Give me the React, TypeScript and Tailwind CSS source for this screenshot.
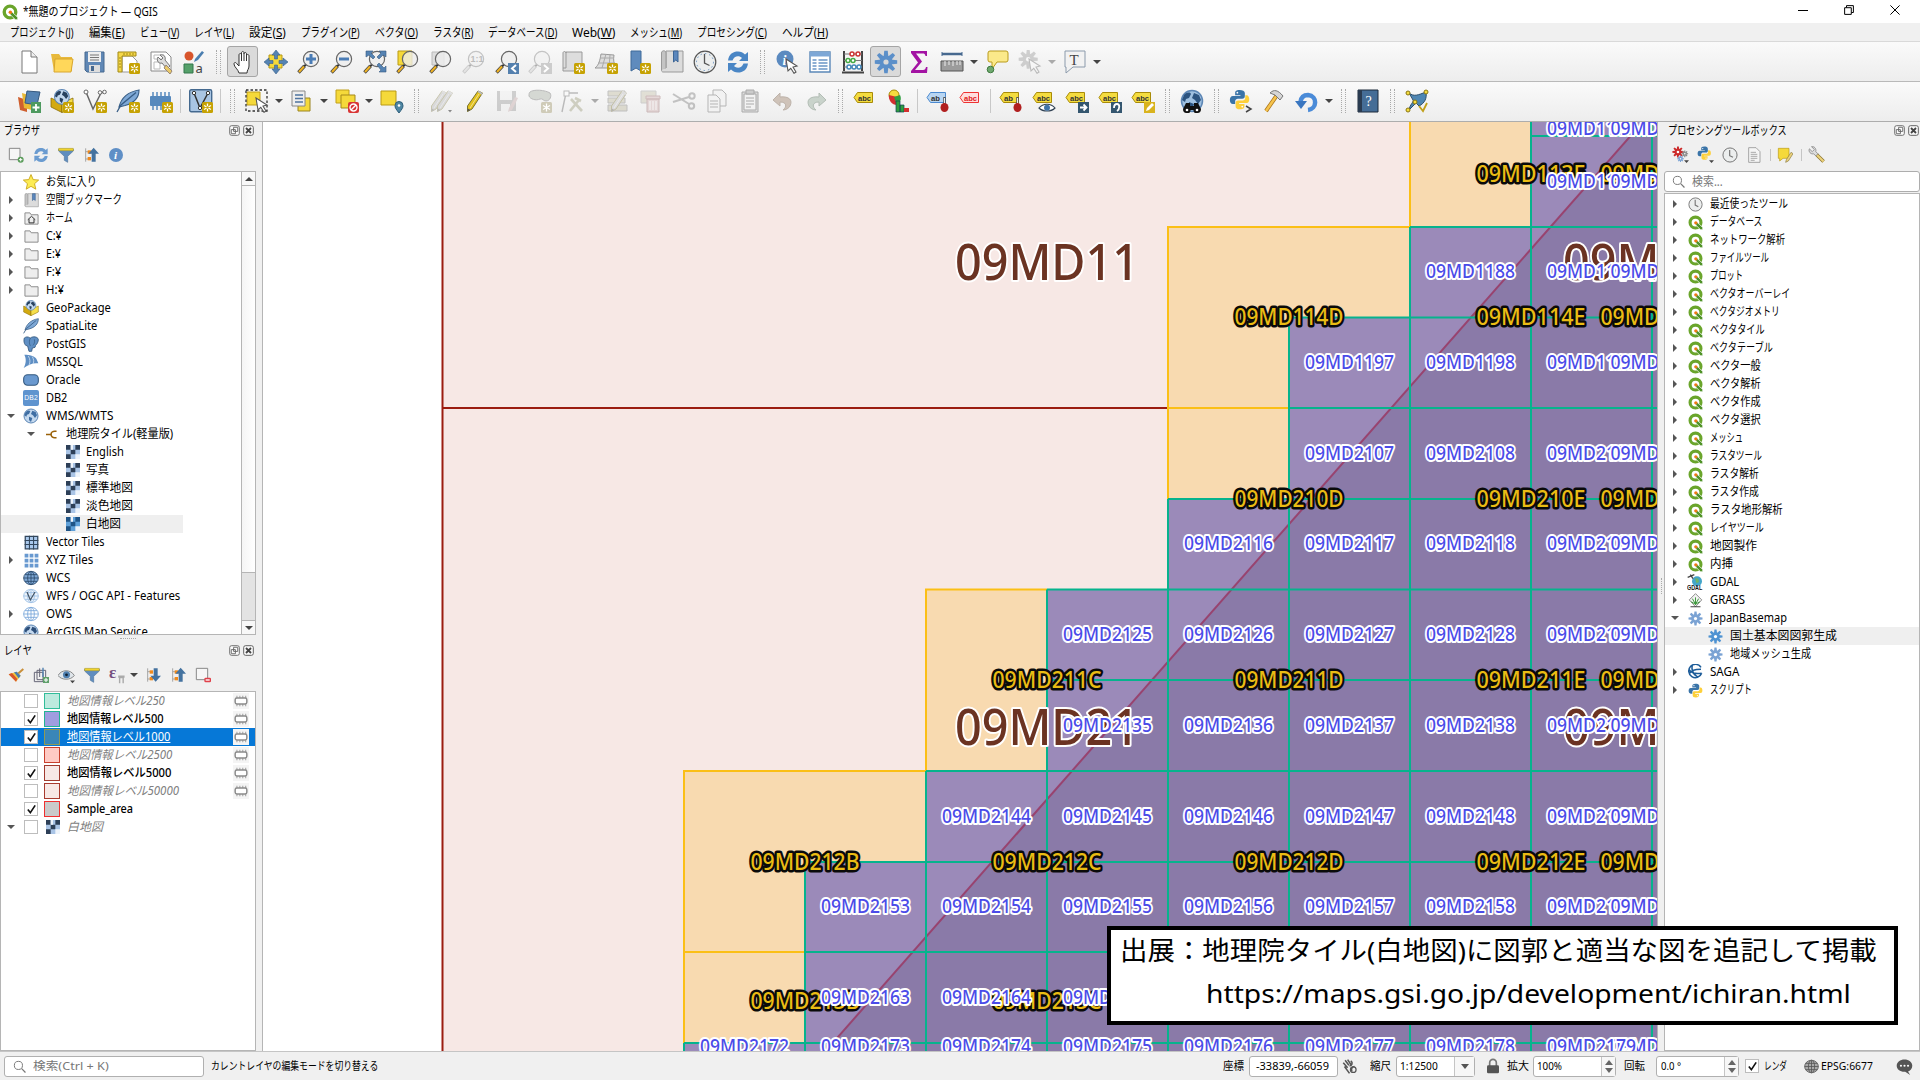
import React, { useLayoutEffect, useRef, useState } from 'react';

const UI = "font-['Noto_Sans','Noto_Sans_CJK_JP',sans-serif]";

/* One line of text, condensed or widened to a fixed advance width. */
function Fit({ w, className = '', children }: { w: number; className?: string; children: React.ReactNode }) {
  const ref = useRef<HTMLSpanElement>(null);
  const [s, setS] = useState(1);
  useLayoutEffect(() => {
    if (ref.current && ref.current.offsetWidth) setS(w / ref.current.offsetWidth);
  }, [w]);
  return (
    <span className="inline-block shrink-0 whitespace-nowrap" style={{ width: w }}>
      <span ref={ref} className={`inline-block origin-left whitespace-nowrap ${className}`} style={{ transform: `scaleX(${s})` }}>
        {children}
      </span>
    </span>
  );
}

function Svg({ s = 24, children, className = '' }: { s?: number; children: React.ReactNode; className?: string }) {
  return (
    <svg width={s} height={s} viewBox="0 0 24 24" className={`shrink-0 ${className}`} fill="none">
      {children}
    </svg>
  );
}

/* ---------- shared icon parts ---------- */
const Star = () => (
  <g>
    <rect x="13" y="13" width="11" height="11" rx="1.5" fill="#c6a203" />
    <path d="M18.5 14.5v8M15 16.5l7 4M15 20.5l7-4" stroke="#fff" strokeWidth="1.3" />
    <circle cx="18.5" cy="18.5" r="1.3" fill="#c6a203" />
  </g>
);
const Lens = ({ dim = false, children }: { dim?: boolean; children?: React.ReactNode }) => (
  <g opacity={dim ? 0.35 : 1}>
    <path d="M9.5 14L7 16.5" stroke="#333" strokeWidth="2" />
    <path d="M7.5 16L1.5 22.5" stroke={dim ? '#777' : '#444'} strokeWidth="3.4" />
    <path d="M7 16.5L2 22" stroke={dim ? '#ccc' : '#f0b323'} strokeWidth="2" />
    <circle cx="14" cy="9" r="7.6" fill="#eee" fillOpacity="0.8" stroke="#666" strokeWidth="1.2" />
    {children}
  </g>
);
const Pencil = ({ c = '#e3c21c', x = 0 }: { c?: string; x?: number }) => (
  <g transform={`translate(${x} 0)`}>
    <path d="M16 2l4.5 2L10 20l-4.5 2.5L5.500 17z" fill={c} stroke="#7b7330" strokeWidth="1" />
    <path d="M15.500 3L20 6l.6-2L16.500 1.500z" fill="#bbb" />
    <path d="M5.500 22.500l.3-3 2.600 1.600z" fill="#555" />
    <path d="M17 5L8 19" stroke="#fff" strokeOpacity=".5" />
  </g>
);
const gearTeeth = [0, 45, 90, 135, 180, 225, 270, 315];
const Gear = ({ c = '#5b8fc9', hole = '#d8d8d8' }: { c?: string; hole?: string }) => (
  <g>
    {gearTeeth.map((a) => (
      <path key={a} d="M10.300 .8h3.400l.8 6.700h-5z" fill={c} transform={`rotate(${a} 12 12)`} />
    ))}
    <circle cx="12" cy="12" r="6.500" fill={c} />
    <circle cx="12" cy="12" r="2.600" fill={hole} />
  </g>
);
const Globe = ({ c = '#5c86b5', line = '#27415f', bg = '#c3d8ee' }: { c?: string; line?: string; bg?: string }) => (
  <g>
    <circle cx="12" cy="12" r="10.500" fill={bg} stroke={c} strokeWidth="1.500" />
    <path d="M4 6c3-3 6-3 7-1l-2 4-3 1-1 3-3-2zM14 4l5 2 2 5-3 4-3-4-3-2zM9 13l5 2-2 6-3-3z" fill={line} />
  </g>
);
const Grid = ({ c, bg }: { c: string; bg: string }) => (
  <g stroke={c} strokeWidth="1.300" fill={bg}>
    <ellipse cx="12" cy="12" rx="11" ry="10" />
    <ellipse cx="12" cy="12" rx="5" ry="10" />
    <path d="M1 12h22M3 7h18M3 17h18M12 2v20" />
  </g>
);
const Python = () => (
  <g>
    <path d="M12 1c-4 0-5 1.500-5 3.500V7h6v1H4.500C2 8 1 10 1 12.500S2 17 4.500 17H7v-3c0-2 1.500-3 3-3h5c2 0 3-1 3-3V4.500C18 2 15.500 1 12 1z" fill="#3a74a8" />
    <path d="M12.500 23c4 0 5-1.500 5-3.500V17h-6v-1H20c2.500 0 3-2 3-4.500S22 7 20 7h-1.500v3c0 2-1.500 3-3 3h-5c-2 0-3 1-3 3v3.500C7.500 22 9 23 12.500 23z" fill="#fdd03b" />
    <circle cx="9.500" cy="4.200" r="1" fill="#fff" />
    <circle cx="15" cy="20" r="1" fill="#fff" />
  </g>
);
const QLogo = ({ s = 15 }: { s?: number }) => (
  <Svg s={s}>
    <circle cx="12" cy="12" r="8.700" stroke="#6aa52b" strokeWidth="5" />
    <path d="M12 12l3.500.5L23.500 20v3.500H20L12.500 16z" fill="#4f9227" stroke="#fff" strokeWidth="1" />
    <circle cx="12.500" cy="12.500" r="2.600" fill="#ee7913" />
  </Svg>
);
const Refresh = ({ c = '#4a86c5' }: { c?: string }) => (
  <g fill={c}>
    <path d="M2 10.500C3 4 7 1.500 12 1.500c3 0 5 1 7 3L22 2v9h-9l3-3c-3-3-8-2-9.500 2.500z" />
    <path d="M22 13.500c-1 6.500-5 9-10 9-3 0-5-1-7-3L2 22v-9h9l-3 3c3 3 8 2 9.500-2.500z" />
  </g>
);
const Clock = ({ s = 24 }: { s?: number }) => (
  <Svg s={s}>
    <circle cx="12" cy="12" r="10.600" fill="#eceeee" stroke="#777" strokeWidth="1.500" />
    <path d="M11.500 4.500V13l5 2.500" stroke="#777" strokeWidth="1.800" />
  </Svg>
);
const Cursor = () => <path d="M11 9l11 7-4 1 3 5-2 1.300-3.200-5L13 21z" fill="#fff" stroke="#555" strokeWidth="1.100" />;
const BookMark = () => (
  <g>
    <path d="M6 1h17v21H3c-2 0-2-4 0-4h3z" fill="#dcdcdc" stroke="#999" />
    <path d="M6 18V3c0-3-4.500-3-4.500 0v17" fill="#c4c4c4" stroke="#999" />
    <path d="M13.500 1h4.500v11l-2.200-2-2.300 2z" fill="#5b87bd" stroke="#3c6595" />
  </g>
);
const Tag = ({ c = '#f4dc3f', st = '#a88b08', children }: { c?: string; st?: string; children?: React.ReactNode }) => (
  <g>
    <path d="M1 8.500l3.500-5h15v10H4.500z" fill={c} stroke={st} />
    {children}
  </g>
);
const Abc = ({ t = 'abc', f = '#333' }: { t?: string; f?: string }) => (
  <text x="5" y="11.500" fontSize="7.500" fontWeight="700" fill={f} fontFamily="Liberation Sans" textLength={t === 'ab' ? 9 : 13} lengthAdjust="spacingAndGlyphs">{t}</text>
);
const Pin = () => (
  <g>
    <path d="M18.500 8v9" stroke="#555" strokeWidth="2.500" />
    <path d="M18.500 9v8" stroke="#eee" />
    <ellipse cx="18.500" cy="18.500" rx="4" ry="4.500" fill="#b11f1f" />
  </g>
);
const Tree = () => (
  <g>
    <path d="M4 2v20M4 7h4M4 18h4" stroke="#999" strokeWidth="1.300" />
    <rect x="7" y="5" width="5" height="5" fill="#f08a1d" />
    <rect x="7" y="15" width="5" height="5" fill="#f08a1d" />
  </g>
);
const Funnel = () => (
  <g>
    <path d="M1 3h22v3l-8.500 8v9l-5-3v-6L1 6z" fill="#5f8dbf" stroke="#50779f" />
    <path d="M1 2h22v3.500H1z" fill="#f2d42c" stroke="#a8931a" strokeWidth=".6" />
  </g>
);
const Checker = ({ a = '#2d3f57', b = '#a9c4e6' }: { a?: string; b?: string }) => (
  <Svg s={14}>
    <rect width="24" height="24" fill={b} />
    <path d="M0 0h8v8H0zM16 0h8v8h-8zM8 8h8v8H8zM0 16h8v8H0z" fill={a} />
    <path d="M8 0h4v8H8zM16 16h8v8h-8z" fill="#eef4fb" />
  </Svg>
);
const Box = () => (
  <g>
    <path d="M1 9l11 5v9.500L1 18z" fill="#d3aa10" stroke="#8a6d08" strokeWidth=".8" />
    <path d="M23 9l-11 5v9.500L23 18z" fill="#f6df4b" stroke="#8a6d08" strokeWidth=".8" />
    <g transform="translate(3.500 -0.500) scale(.7)"><Globe /></g>
  </g>
);
const Feather = () => (
  <g>
    <path d="M3 18C5 10 11 3 23 1c0 8-5 13-14 15.500z" fill="#7ea8d6" stroke="#375d86" strokeWidth="1.100" />
    <path d="M1 23L5 16 20 3.500" stroke="#375d86" strokeWidth="1.300" />
  </g>
);
const Chip = ({ c = '#5789bd' }: { c?: string }) => (
  <g>
    <rect x="1" y="7" width="21" height="10" rx="1" fill={c} />
    <path d="M4 3v18M8 3v18M12 3v18M16 3v18M20 3v18" stroke={c} strokeWidth="1.500" />
  </g>
);

/* ---------- toolbar scaffolding ---------- */
const Slot = ({ children, on = false }: { children: React.ReactNode; on?: boolean }) => (
  <div className="flex h-full w-[33px] shrink-0 items-center justify-center">
    {on ? (
      <div className="flex h-[31px] w-[31px] items-center justify-center rounded-[3px] border border-[#a5a5a5] bg-[#dadada]"><Svg>{children}</Svg></div>
    ) : (
      <Svg>{children}</Svg>
    )}
  </div>
);
const Handle = () => (
  <div className="flex w-4 shrink-0 justify-center gap-[3px]">
    <span className="h-6 border-l border-dotted border-[#aaa]" />
    <span className="h-6 border-l border-dotted border-[#aaa]" />
  </div>
);
const Sep = () => <div className="flex w-[7px] shrink-0 justify-center"><span className="h-6 w-px bg-[#c8c8c8]" /></div>;
const Down = ({ dim = false }: { dim?: boolean }) => (
  <div className="flex w-3 shrink-0 justify-center">
    <span className={`border-x-[4px] border-t-[4px] border-x-transparent ${dim ? 'border-t-[#aaa]' : 'border-t-[#444]'}`} />
  </div>
);
const barCls = 'flex h-[40px] shrink-0 items-center border-b bg-linear-to-b from-[#fafafa] to-[#ededed] pl-3';

function MainBar() {
  return (
    <div className={`${barCls} border-[#b9b9b9]`}>
      <Slot><path d="M5 1h9l6 6v16H5z" fill="#fff" stroke="#777" /><path d="M14 1v6h6" fill="#eee" stroke="#777" /></Slot>
      <Slot><path d="M1 4h8l2 3h11v14H4z" fill="#e8b93c" /><path d="M5 9h18l-2 13H4z" fill="#ffd75a" stroke="#d8a62e" /></Slot>
      <Slot><path d="M2 2h19v20H4l-2-2z" fill="#5f87b5" stroke="#47688e" /><path d="M5 2h13v10H5z" fill="#eee" /><path d="M7 5h9M7 7.500h9M7 10h9" stroke="#777" /><path d="M6 15h11v7H6z" fill="#ddd" /><path d="M8 16h3v5H8z" fill="#47688e" /></Slot>
      <Slot><path d="M6 6h10l5 5v11H6z" fill="#fff" stroke="#999" /><path d="M2 2h18v4H6v16H2z" fill="#f5d84a" stroke="#a18815" /><path d="M8 3v2M11 3v2M14 3v2M17 3v2M3 8h2M3 11h2M3 14h2M3 17h2" stroke="#a18815" /><Star /></Slot>
      <Slot><path d="M2 2h15l5 5v14H2z" fill="#fff" stroke="#888" /><path d="M5 5h10v4H5zM5 12h6v7H5z" stroke="#bbb" /><path d="M9 7l3 3 2-2-3-3c4-1 6 2 5 5l5 6-3 3-5-6c-3 1-6-2-4-6z" fill="#ddd" stroke="#777" /><path d="M17 15l6 6-2 3-6-6z" fill="#e9c96a" stroke="#998877" /></Slot>
      <Slot><circle cx="7" cy="6" r="4.500" fill="#d8552c" /><path d="M13 9l7-8 2 1.500L16 10l-4 2z" fill="#4a7eb0" /><path d="M2 14h9v9H2z" fill="#55a06a" stroke="#33774a" /><text x="13.500" y="23" fontSize="13" fill="#444" fontFamily="Noto Sans">a</text></Slot>
      <Handle />
      <Slot on><path d="M8 23c-1-4-5-6-5-9 0-2 2-2 3 0l2 2V5c0-2 2.500-2 2.500 0V3c0-2 2.500-2 2.500 0v1c0-2 2.500-2 2.500 0v2c0-2 2.500-2 2.500 0v10c0 3-2 4-2 7z" fill="#fff" stroke="#333" /><path d="M10.500 5v6M13 4v7M15.500 6v5" stroke="#333" /></Slot>
      <Slot><path d="M5 5h13v13H5z" fill="#f5d93a" stroke="#b99a14" /><path d="M12 0l4 5h-2.500v4h-3V5H8zM12 24l4-5h-2.500v-4h-3v4H8zM0 12l5-4v2.500h4v3H5V16zM24 12l-5-4v2.500h-4v3h4V16z" fill="#5583b3" stroke="#3a618b" strokeWidth=".6" /></Slot>
      <Slot><Lens><path d="M14 4v10M9 9h10" stroke="#4a7cb5" strokeWidth="3" /></Lens></Slot>
      <Slot><Lens><path d="M9 9h10" stroke="#4a7cb5" strokeWidth="3" /></Lens></Slot>
      <Slot><Lens /><path d="M3 1h7L8 3l4 4-2 2-4-4-3 2zM23 1h-7l2 2-4 4 2 2 4-4 3 2zM23 22h-7l2-2-4-5 2-2 5 5 2-2z" fill="#5583b3" stroke="#36597f" strokeWidth=".6" /></Slot>
      <Slot><path d="M2 1h14v14H2z" fill="#f5d93a" stroke="#b99a14" /><Lens /></Slot>
      <Slot><path d="M3 2h12v13H3z" fill="#ddd" stroke="#bbb" /><Lens /></Slot>
      <Slot><Lens dim><text x="8.500" y="12" fontSize="9" fontWeight="700" fill="#555" fontFamily="Liberation Sans">1:1</text></Lens></Slot>
      <Slot><Lens /><path d="M13 13h11v11H13z" fill="#5480ae" /><path d="M21 15l-4 3.500 4 3.500" stroke="#fff" strokeWidth="2" /></Slot>
      <Slot><Lens dim /><path d="M13 13h11v11H13z" fill="#ccc" /><path d="M16 15l4 3.500-4 3.500" stroke="#fff" strokeWidth="2" /></Slot>
      <Slot><path d="M5 2h16v19H2V3c0-2 3-2 3 0z" fill="#ddd" stroke="#999" /><path d="M5 2v16H2" stroke="#999" /><Star /></Slot>
      <Slot><path d="M7 4l13 1c-1 5 0 9 2 13H1c4-3 5-8 6-14z" fill="#ddd" stroke="#999" /><path d="M4 13h17M6 8h14M12 4l-4 14M16 5l-1 13" stroke="#aaa" /><Star /></Slot>
      <Slot><path d="M4 1h10v20l-5-3-5 3z" fill="#5f8bbd" stroke="#3f6a9a" /><Star /></Slot>
      <Slot><BookMark /></Slot>
      <Slot><circle cx="12" cy="12" r="10.800" fill="#eceeee" stroke="#555" strokeWidth="1.200" /><circle cx="12" cy="12" r="8.500" stroke="#6b93c0" strokeDasharray="1.500 2.900" /><path d="M11.500 4v9l5 2.500" stroke="#555" strokeWidth="1.300" /></Slot>
      <Slot><Refresh /></Slot>
      <Handle />
      <Slot><circle cx="10" cy="9" r="8.500" fill="#5b8ac0" /><text x="7.500" y="14.500" fontSize="14" fontStyle="italic" fontWeight="700" fill="#fff" fontFamily="Liberation Serif">i</text><Cursor /></Slot>
      <Slot><path d="M2 2h20v20H2z" fill="#fff" stroke="#5b88b8" strokeWidth="1.400" /><path d="M2 2h20v4.500H2z" fill="#7da7d6" /><path d="M4.500 10h4M10.500 10h9M4.500 13h4M10.500 13h9M4.500 16h4M10.500 16h9M4.500 19h4M10.500 19h9" stroke="#6a95c6" strokeWidth="1.500" /></Slot>
      <Slot><path d="M3 1v20M21 1v20M1 22.500h22" stroke="#444" strokeWidth="2" /><path d="M3 4h18M3 10.500h18M3 17h18" stroke="#777" /><g strokeWidth="1.500" fill="#fff"><circle cx="11" cy="4" r="2" stroke="#c33" /><circle cx="17" cy="4" r="2" stroke="#c33" /><circle cx="7" cy="10.500" r="2" stroke="#4a4" /><circle cx="12" cy="10.500" r="2" stroke="#4a4" /><circle cx="8" cy="17" r="2" stroke="#48b" /><circle cx="13" cy="17" r="2" stroke="#48b" /><circle cx="18" cy="17" r="2" stroke="#48b" /></g></Slot>
      <Slot on><Gear /></Slot>
      <Slot><path d="M4 1h16v5h-1.500c-.5-2-1-2.500-3-2.500H9l6 8-7 8.500h8c2 0 2.500-1 3-3H20.500L20 23H4v-2l7-8.500L4 3z" fill="#a313a3" /></Slot>
      <Slot><path d="M2 4h20" stroke="#47698f" strokeWidth="2.500" /><path d="M2 2v4M22 2v4" stroke="#47698f" /><path d="M1 11h22v10H1z" fill="#9c9c9c" stroke="#555" /><path d="M5 11v5M9 11v4M13 11v5M17 11v4M20 11v4" stroke="#eee" /></Slot>
      <Down />
      <Slot><path d="M5 1h16q2 0 2 2v7q0 2-2 2h-9l-5 7v-7H5q-2 0-2-2V3q0-2 2-2z" fill="#fbe98a" stroke="#b99b1c" /><circle cx="5.500" cy="19.500" r="3.300" fill="#6fa86f" stroke="#3e7a3e" /></Slot>
      <Slot><g opacity=".35"><g transform="translate(0 -1) scale(.85)"><Gear c="#888" hole="#fff" /></g><Cursor /></g></Slot>
      <Down dim />
      <Slot><path d="M2 1h20v16H10l-7 6v-6H2z" fill="#f2f2f2" stroke="#8b9aab" /><text x="6.500" y="14.500" fontSize="15" fill="#444" fontFamily="Liberation Serif">T</text></Slot>
      <Down />
    </div>
  );
}

function EditBar() {
  return (
    <div className={`${barCls} border-[#adadad] pb-[2px]`}>
      <Slot><path d="M1 8l9 3v12l-7-2z" fill="#cf5f2e" /><path d="M5 4l10 3v14l-8-2z" fill="#e9b934" /><path d="M10 2l13 1-3 13-12-2z" fill="#5583b3" stroke="#36597f" /><path d="M14 13h10v11H14z" fill="#4e9a5f" /><path d="M19 15v7M15.500 18.500h7" stroke="#fff" strokeWidth="1.800" /></Slot>
      <Slot><Box /><Star /></Slot>
      <Slot><path d="M3 3l7 17 8-16 3-1" stroke="#666" strokeWidth="1.500" /><g fill="#fff" stroke="#666"><circle cx="3" cy="3" r="2" /><circle cx="17" cy="3.500" r="1.800" /><circle cx="21.500" cy="3" r="1.800" /></g><Star /></Slot>
      <Slot><Feather /><Star /></Slot>
      <Slot><Chip /><Star /></Slot>
      <Sep />
      <Slot><rect x=".7" y=".7" width="22" height="22" rx="1.500" fill="#a9c5e3" stroke="#44698f" strokeWidth="1.400" /><path d="M5 4l6 15 8-15" stroke="#333" strokeWidth="1.500" /><g fill="#fff" stroke="#333"><circle cx="5" cy="4" r="1.700" /><circle cx="11" cy="19" r="1.700" /><circle cx="19" cy="4" r="1.700" /></g><Star /></Slot>
      <Sep />
      <Handle />
      <Slot><path d="M2 3h13v13H2z" fill="#f5d93a" stroke="#c1a01a" /><path d="M1 1h21v21H1z" stroke="#333" strokeDasharray="2.500 2" strokeWidth="1.300" /><Cursor /></Slot>
      <Down />
      <Slot><path d="M8 9h12v13H8z" fill="#f5d93a" stroke="#9a8420" /><path d="M2 2h13v15H2z" fill="#eee" stroke="#888" /><path d="M5 6h8M5 9.500h8M5 13h8" stroke="#4f74a0" strokeWidth="1.500" /></Slot>
      <Down />
      <Slot><path d="M1 1h13v13H1z" fill="#f5d93a" stroke="#c1a01a" /><path d="M6 6h14v13H6z" fill="#f5d93a" stroke="#a5891a" /><rect x="13" y="13" width="11" height="11" rx="2" fill="#d83535" /><circle cx="18.500" cy="18.500" r="3.500" stroke="#fff" strokeWidth="1.400" /><path d="M16 21l5-5" stroke="#fff" strokeWidth="1.400" /></Slot>
      <Down />
      <Slot><path d="M1 2h15v14H1z" fill="#f5d93a" stroke="#b99a14" /><path d="M19 24c-3-4-4-5-4-7.500a4 4 0 018 0c0 2.500-1 3.500-4 7.500z" fill="#4f86a3" stroke="#2f5f7a" /><circle cx="19" cy="16.500" r="1.300" fill="#fff" /></Slot>
      <Handle />
      <Slot><g opacity=".35"><Pencil c="#aaa" x={-3} /><Pencil c="#aaa" x={3} /></g><path d="M19 21h4l-2 2.500z" fill="#888" /></Slot>
      <Slot><Pencil /></Slot>
      <Slot><g opacity=".35"><path d="M2 2h19v20H2z" fill="#888" /><path d="M5 2h12v9H5zM6 15h9v7H6z" fill="#eee" /><path d="M20 8l3 1-6 12-4 2 1-4z" fill="#b99" /></g></Slot>
      <Slot><path d="M2 3c4-3 15-2 20 1 2 3 0 8-4 8-3 0-3-3-6-2-4 2-10 0-11-3 0-2 0-3 1-4z" fill="#d5d8d3" stroke="#bbb" /><rect x="13" y="13" width="11" height="11" rx="1.500" fill="#cfcbb8" /><path d="M18.500 14.500v8M15 16.500l7 4M15 20.500l7-4" stroke="#fff" strokeWidth="1.300" /></Slot>
      <Slot><g opacity=".4"><path d="M1 23L5 4h12" stroke="#666" strokeWidth="1.400" /><rect x="3" y="2" width="5" height="5" fill="#fff" stroke="#666" /><path d="M10 10l11 12M18 11L9 22M14 9l6 3" stroke="#999977" strokeWidth="2.600" /></g></Slot>
      <Down dim />
      <Slot><g opacity=".4"><path d="M2 2h17v5H2zM2 9h17v5H2zM2 16h19v6H2z" fill="#bbb69a" stroke="#777" /><Pencil c="#bbb" /></g></Slot>
      <Slot><g opacity=".35"><path d="M2 2h15v12H2z" fill="#bbb69a" stroke="#888" /><path d="M7 7h14v3H7zM8 10h12v13H8z" fill="#c9a3a3" stroke="#855" /><path d="M11 12v9M14 12v9M17 12v9" stroke="#fff" /></g></Slot>
      <Slot><g opacity=".35" stroke="#666" strokeWidth="2"><path d="M1 5l16 10M1 13L17 8" /><circle cx="20" cy="7" r="2.700" /><circle cx="19.500" cy="17" r="2.700" /></g></Slot>
      <Slot><g stroke="#b5b5b5" fill="#f2f2f2"><path d="M8 1h9l4 4v12H8z" /><path d="M3 6h8l4 4v13H3z" /><path d="M5 12h8M5 15h8M5 18h8" /></g></Slot>
      <Slot><g stroke="#aaa" fill="#f2f2f2"><path d="M4 3h16v20H4z" fill="#ddd" /><path d="M6 5h12v16H6z" /><path d="M8 1h8v4H8z" fill="#ccc" /><path d="M8 9h8M8 12h8M8 15h8M8 18h5" /></g></Slot>
      <Slot><path d="M9 4v4c9-1 13 3 10 9-1 2-4 4-7 4 4-3 4-8-3-8v4l-7-6z" fill="#cfc3b9" stroke="#bdb3aa" /></Slot>
      <Slot><path d="M15 4v4C6 7 2 11 5 17c1 2 4 4 7 4-4-3-4-8 3-8v4l7-6z" fill="#c9d3cb" stroke="#b3bdb5" /></Slot>
      <Handle />
      <Slot><Tag><Abc /></Tag></Slot>
      <Slot><circle cx="8" cy="6" r="5" fill="#f4dc3f" stroke="#a88b08" /><path d="M3 6c-1 5 3 10 8 10V8z" fill="#d32f2f" /><path d="M8 8l6-2c2 4 0 8-3 10z" fill="#2e9e3f" /><path d="M10 12h4v11h-4zM14 16h4v7h-4z" fill="#2e9e3f" stroke="#114455" strokeWidth=".7" /><path d="M18 19h5v4h-5z" fill="#d32f2f" /></Slot>
      <Sep />
      <Slot><Tag c="#b9d6f2" st="#4b8ad0"><Abc t="ab" /></Tag><Pin /></Slot>
      <Slot><Tag c="#ffdede" st="#e33"><Abc f="#e02020" /></Tag></Slot>
      <Sep />
      <Slot><Tag><Abc t="ab" /></Tag><Pin /></Slot>
      <Slot><Tag><Abc /></Tag><path d="M7 19c4-5 12-5 16 0-4 4-12 4-16 0z" fill="#fff" stroke="#334455" strokeWidth="1.200" /><circle cx="15" cy="18.800" r="3" fill="#3f73a8" /></Slot>
      <Slot><Tag><Abc /></Tag><path d="M13 13h11v11H13z" fill="#34566f" /><path d="M15 18.500h6M18.500 15.500l3 3-3 3" stroke="#fff" strokeWidth="1.800" /></Slot>
      <Slot><Tag><Abc /></Tag><path d="M13 13h11v11H13z" fill="#34566f" /><path d="M19 22c3-2 3-7 0-7-2 0-3 2-3 4" stroke="#fff" strokeWidth="1.800" /></Slot>
      <Slot><Tag><Abc /></Tag><path d="M13 13h11v11H13z" fill="#d9b31d" /><path d="M15 22l1-3 5-5 2 2-5 5z" fill="#fff" /></Slot>
      <Handle />
      <Slot><Globe line="#2c5480" bg="#9fc0e0" /><path d="M6 14h4v3h4v-3h4l3 6q0 4-3.500 4h-2q-2 0-2-3h-3q0 3-2 3h-2Q3 24 3 20z" fill="#111" /><circle cx="7" cy="21" r="1.300" fill="#fff" /><circle cx="17" cy="21" r="1.300" fill="#fff" /></Slot>
      <Handle />
      <Slot><g transform="scale(.88)"><Python /></g><path d="M17 17l5 3-5 3" stroke="#444" strokeWidth="1.500" /></Slot>
      <Slot><path d="M15 6L4 22" stroke="#a8731a" strokeWidth="4" /><path d="M15 6L4 22" stroke="#f6c34c" strokeWidth="2.500" /><path d="M8 4c4-4 8-3 13 3l-3 4-5-5z" fill="#d5d5d5" stroke="#777" /></Slot>
      <Slot><path d="M13 21c9-1 10-14 0-15-5 0-7 3-7.500 7" stroke="#4a8bd8" strokeWidth="4.500" /><path d="M0 12h12l-6 8z" fill="#3a76c0" /></Slot>
      <Down />
      <Handle />
      <Slot><path d="M2 1h20v22H2z" fill="#456d96" stroke="#1d2a3a" /><path d="M2 1h4v22H2z" fill="#2a3b50" /><text x="9.500" y="17" fontSize="14" fill="#fff" fontFamily="Liberation Serif">?</text></Slot>
      <Handle />
      <Slot><path d="M4 4c5 4 9 2 17-1 1 6-1 11-7 14l-3-3-7 7c1-6 5-8 4-10z" fill="#4e86b3" stroke="#2d4e6a" /><g fill="#f4dc3f" stroke="#8a7510"><circle cx="3" cy="4" r="2" /><circle cx="21" cy="3" r="2" /><circle cx="3" cy="21" r="2" /><circle cx="10" cy="13" r="2" /></g><path d="M14 17l4 5 4-8" stroke="#c1a01a" strokeWidth="1.800" /></Slot>
    </div>
  );
}

/* ---------- docks ---------- */
const DockHead = ({ title, w }: { title: string; w: number }) => (
  <div className="flex h-[17px] shrink-0 items-center pl-1 text-[12px]">
    <Fit w={w}>{title}</Fit>
    <div className="ml-auto flex gap-[3px] pr-[1px]">
      <Svg s={11}><rect x="1.500" y="1.500" width="21" height="21" rx="4" fill="#fafafa" stroke="#666" strokeWidth="2" /><path d="M10 5h9v9h-9zM5 10h9v9H5z" stroke="#666" strokeWidth="2" fill="#fafafa" /></Svg>
      <Svg s={11}><rect x="1.500" y="1.500" width="21" height="21" rx="4" fill="#fafafa" stroke="#555" strokeWidth="2" /><path d="M6.500 6.500l11 11M17.500 6.500l-11 11" stroke="#444" strokeWidth="4" /></Svg>
    </div>
  </div>
);
const Arrow = ({ open }: { open?: boolean }) =>
  open ? <span className="border-x-[4px] border-t-[4px] border-x-transparent border-t-[#555]" /> : <span className="border-y-[4px] border-l-[4px] border-y-transparent border-l-[#555]" />;

type Row = { t: string; w: number; a?: 'o' | 'c'; l?: number; i: React.ReactNode; sel?: boolean };
const folder = <Svg s={15}><path d="M1.500 3h8l2 3h11v15h-21z" fill="#eee" stroke="#888" strokeWidth="1.500" /></Svg>;
const ck = <Checker />;
const browser: Row[] = [
  { t: 'お気に入り', w: 51, i: <Svg s={16}><path d="M12 .8l3.300 7.600 8.200.7-6.200 5.500 1.900 8.200-7.200-4.300-7.200 4.300 1.900-8.200L.5 9.100l8.200-.7z" fill="#fdec54" stroke="#c9a415" strokeWidth="1.300" /></Svg> },
  { t: '空間ブックマーク', w: 76, a: 'c', i: <Svg s={15}><BookMark /></Svg> },
  { t: 'ホーム', w: 27, a: 'c', i: <Svg s={15}><path d="M1.500 3h8l2 3h11v15h-21z" fill="#eee" stroke="#888" strokeWidth="1.500" /><path d="M6 14l6-5.500 6 5.500M8 13v6h8v-6" stroke="#333" strokeWidth="1.600" /></Svg> },
  { t: 'C:¥', w: 16, a: 'c', i: folder },
  { t: 'E:¥', w: 15, a: 'c', i: folder },
  { t: 'F:¥', w: 15, a: 'c', i: folder },
  { t: 'H:¥', w: 18, a: 'c', i: folder },
  { t: 'GeoPackage', w: 65, i: <Svg s={16}><Box /></Svg> },
  { t: 'SpatiaLite', w: 51, i: <Svg s={16}><Feather /></Svg> },
  { t: 'PostGIS', w: 40, i: <Svg s={16}><path d="M2 3c4-3 7-1 9 0 4-3 11-2 12 2 0 4-2 7-4 9l-1 3-4 1-1 5h-4l-2-8-3-1C1 11 1 6 2 3z" fill="#5f8fc4" stroke="#34597f" strokeWidth="1.300" /><path d="M11 3c-2 4-2 8 0 12M17 5c1 4 0 7-2 9" stroke="#34597f" /></Svg> },
  { t: 'MSSQL', w: 37, i: <Svg s={16}><path d="M2 1c8 0 15 2 18 6l3 7c-7-1-14 1-22 7 4-7 4-14 1-20z" fill="#5f8fc4" /><path d="M8 3c3 5 3 9 1 14M14 4c2 4 3 7 1 11" stroke="#cfe0f2" strokeWidth="1.200" /></Svg> },
  { t: 'Oracle', w: 34, i: <Svg s={16}><rect x="1" y="4" width="22" height="16" rx="6" fill="#6a99cf" stroke="#34597f" strokeWidth="1.600" /></Svg> },
  { t: 'DB2', w: 21, i: <Svg s={16}><rect width="24" height="24" rx="3" fill="#5f94cf" /><text x="2" y="15.500" fontSize="10" fill="#fff" fontFamily="Liberation Sans" textLength="20">DB2</text></Svg> },
  { t: 'WMS/WMTS', w: 67, a: 'o', i: <Svg s={16}><Globe line="#3f6ea3" /></Svg> },
  { t: '地理院タイル(軽量版)', w: 107, a: 'o', l: 1, i: <Svg s={11}><path d="M0 12h11M23 5h-4c-4 0-8 3-8 7s4 7 8 7h4" stroke="#9a6209" strokeWidth="3.600" /></Svg> },
  { t: 'English', w: 38, l: 2, i: ck },
  { t: '写真', w: 23, l: 2, i: ck },
  { t: '標準地図', w: 47, l: 2, i: ck },
  { t: '淡色地図', w: 47, l: 2, i: ck },
  { t: '白地図', w: 35, l: 2, sel: true, i: <Checker a="#1f5486" b="#5fa0d8" /> },
  { t: 'Vector Tiles', w: 59, i: <Svg s={15}><path d="M2 2h20v20H2z" fill="#a9c8ec" stroke="#32465c" strokeWidth="2" /><path d="M8.700 1v22M15.300 1v22M1 8.700h22M1 15.300h22" stroke="#32465c" strokeWidth="1.700" /></Svg> },
  { t: 'XYZ Tiles', w: 47, a: 'c', i: <Svg s={15}><path d="M1 1h6v6H1zM9 1h6v6H9zM17 1h6v6h-6zM1 9h6v6H1zM9 9h6v6H9zM17 9h6v6h-6zM1 17h6v6H1zM9 17h6v6H9zM17 17h6v6h-6z" fill="#6899d0" /></Svg> },
  { t: 'WCS', w: 24, i: <Svg s={16}><Grid c="#2b4a6c" bg="#7fa8d6" /></Svg> },
  { t: 'WFS / OGC API - Features', w: 134, i: <Svg s={16}><Grid c="#9dbfe4" bg="#eef5fc" /><path d="M6 6l5 12 7-12" stroke="#445566" strokeWidth="1.800" /></Svg> },
  { t: 'OWS', w: 26, a: 'c', i: <Svg s={16}><Grid c="#7aa7da" bg="#fff" /></Svg> },
  { t: 'ArcGIS Map Service', w: 102, i: <Svg s={16}><Globe line="#2d4f7a" /></Svg> },
];

function TreeRow({ r }: { r: Row }) {
  const pad = r.l === 2 ? 'pl-[59px]' : r.l === 1 ? 'pl-[25px]' : 'pl-[5px]';
  return (
    <div className={`flex h-[18px] shrink-0 items-center ${r.sel ? 'w-[182px] bg-[#efefef]' : ''} ${pad}`}>
      {r.l !== 2 && <span className="flex w-[10px] justify-center">{r.a && <Arrow open={r.a === 'o'} />}</span>}
      <span className={`flex shrink-0 items-center justify-center ${r.l === 2 ? 'w-[26px]' : 'w-[30px]'}`}>{r.i}</span>
      <Fit w={r.w} className="leading-[18px]">{r.t}</Fit>
    </div>
  );
}

type Layer = { t: string; w: number; on?: boolean; f: string; mem?: boolean; sel?: boolean };
const layers: Layer[] = [
  { t: '地図情報レベル250', w: 98, f: 'bg-[#bdeade] border-[#31bd9a]', mem: true },
  { t: '地図情報レベル500', w: 97, on: true, f: 'bg-[#a09de0] border-[#22b394]', mem: true },
  { t: '地図情報レベル1000', w: 103, on: true, f: 'bg-[#3a86b8] border-[#8f9a55]', mem: true, sel: true },
  { t: '地図情報レベル2500', w: 105, f: 'bg-[#ffcac4] border-[#c8402d]', mem: true },
  { t: '地図情報レベル5000', w: 104, on: true, f: 'bg-[#f7e8e5] border-[#a03a2e]', mem: true },
  { t: '地図情報レベル50000', w: 112, f: 'bg-[#f7e8e5] border-[#a83a2e]', mem: true },
  { t: 'Sample_area', w: 66, on: true, f: 'bg-[#cacaca] border-[#f03030]' },
];
const Check = ({ on }: { on?: boolean }) => (
  <span className="flex h-[14px] w-[14px] shrink-0 items-center justify-center border border-[#bdbdbd] bg-white">
    {on && <Svg s={11}><path d="M4 12l5.500 7L20 3" stroke="#111" strokeWidth="3.600" /></Svg>}
  </span>
);

function LayerRow({ r }: { r: Layer }) {
  const tone = r.sel ? 'text-white underline' : r.on ? 'font-medium text-black' : 'italic text-[#808080]';
  return (
    <div className={`flex h-[18px] shrink-0 items-center pl-[23px] pr-[6px] ${r.sel ? 'bg-[#0678d7]' : ''}`}>
      <Check on={r.on} />
      <span className={`ml-[6px] mr-[7px] h-4 w-4 shrink-0 border ${r.f}`} />
      <Fit w={r.w} className={`leading-[18px] ${tone}`}>{r.t}</Fit>
      {r.mem && (
        <span className="ml-auto flex h-4 w-4 items-center justify-center bg-[#f4f4f4]">
          <Svg s={14}><path d="M5 3v18M10 3v18M15 3v18M20 3v18" stroke="#aaa" strokeWidth="2" /><rect x="2" y="7" width="20" height="10" rx="3" fill="#fff" stroke="#8b8b8b" strokeWidth="2.500" /></Svg>
        </span>
      )}
    </div>
  );
}

const dots = 'border-dotted border-[#aaa]';
function LeftDock() {
  return (
    <div className="flex w-[263px] shrink-0 flex-col border-r border-[#b5b5b5] bg-[#f0f0f0] text-[12px]">
      <div className="flex h-[49px] w-[255px] shrink-0 flex-col">
        <DockHead title="ブラウザ" w={36} />
        <div className="flex h-[31px] items-center gap-[9px] pl-2">
          <Svg s={16}><path d="M2 2h16v17H2z" fill="#f6f6f6" stroke="#888" strokeWidth="1.500" /><circle cx="19" cy="19" r="4.500" fill="#5a9c5a" /><path d="M19 16.500v5M16.500 19h5" stroke="#fff" strokeWidth="1.500" /></Svg>
          <Svg s={16}><Refresh c="#6a9bd0" /></Svg>
          <Svg s={16}><Funnel /></Svg>
          <Svg s={16}><Tree /><path d="M16 1l8 9h-5v12h-6V10H8z" fill="#44729f" /></Svg>
          <Svg s={16}><circle cx="12" cy="12" r="10.500" fill="#5f8fc6" /><text x="9" y="18" fontSize="17" fontStyle="italic" fontWeight="700" fill="#fff" fontFamily="Liberation Serif">i</text></Svg>
        </div>
      </div>
      <div className="flex h-[464px] w-[256px] shrink-0 border border-[#b5b5b5] bg-white">
        <div className="flex min-w-0 flex-1 flex-col overflow-hidden pt-px">
          {browser.map((r) => <TreeRow key={r.t} r={r} />)}
        </div>
        <div className="flex w-[14px] shrink-0 flex-col border-l border-[#b5b5b5] bg-[#e3e3e3]">
          <div className="flex h-[14px] items-center justify-center border-b border-[#b5b5b5] bg-[#f8f8f8]"><span className="border-x-[4px] border-b-[4px] border-x-transparent border-b-[#444]" /></div>
          <div className="h-[387px] shrink-0 border-b border-[#b5b5b5] bg-linear-to-r from-[#f5f5f5] to-white" />
          <div className="mt-auto flex h-[14px] items-center justify-center border-t border-[#b5b5b5] bg-[#f8f8f8]"><span className="border-x-[4px] border-t-[4px] border-x-transparent border-t-[#444]" /></div>
        </div>
      </div>
      <div className="flex h-[7px] w-[256px] shrink-0 items-center justify-center"><span className={`w-4 border-t ${dots}`} /></div>
      <div className="w-[255px]"><DockHead title="レイヤ" w={28} /></div>
      <div className="flex h-[32px] shrink-0 items-center gap-[9px] pl-2">
        <Svg s={16}><path d="M23 3l-9 8" stroke="#c98f3a" strokeWidth="3" /><path d="M1 11l12-4 6 6-7 9z" fill="#f3c63d" /><path d="M1 11l5-2 8 9-2 4z" fill="#d8552c" /><path d="M9 8l4-1 6 6-3 4z" fill="#4a7eb0" /></Svg>
        <Svg s={16}><path d="M2 8h13v14H2zM6 5h13v14H6zM10 2v13" stroke="#666677" strokeWidth="1.500" /><path d="M15 1v14" stroke="#4a7eb0" strokeWidth="2" /><path d="M15 15h9v9h-9z" fill="#5fa06b" /><path d="M19.500 16.500v6M16.500 19.500h6" stroke="#fff" strokeWidth="1.600" /></Svg>
        <Svg s={17}><path d="M0 12C5 3 18 3 23 12 18 19 5 19 0 12z" fill="#dfe5ea" stroke="#777" strokeWidth="1.200" /><circle cx="12" cy="11" r="5" fill="#4f7faf" /><circle cx="12" cy="11" r="2" fill="#112233" /><path d="M17 19h7l-3.500 4z" fill="#444" /></Svg>
        <Svg s={16}><Funnel /></Svg>
        <Svg s={17}><text x="0" y="16" fontSize="24" fontWeight="700" fill="#76507f" fontFamily="Liberation Serif">ε</text><path d="M13 12h9v3h-1v8h-2v-7h-3v7h-2v-8h-1z" fill="#aaa" /></Svg>
        <div className="-ml-[7px] -mr-[4px]"><Down /></div>
        <Svg s={16}><Tree /><path d="M16 22l8-9h-5V2h-6v11H8z" fill="#44729f" /></Svg>
        <Svg s={16}><Tree /><path d="M16 1l8 9h-5v12h-6V10H8z" fill="#44729f" /></Svg>
        <Svg s={16}><path d="M2 2h17v17H2z" fill="#f6f6f6" stroke="#888" strokeWidth="1.500" /><rect x="14" y="16" width="10" height="7" rx="2" fill="#e0404a" /><path d="M16 19.500h6" stroke="#fff" strokeWidth="2" /></Svg>
      </div>
      <div className="flex w-[256px] flex-1 flex-col border border-[#b5b5b5] bg-white">
        {layers.map((r) => <LayerRow key={r.t} r={r} />)}
        <div className="flex h-[18px] items-center pl-[5px]">
          <span className="flex w-[10px] justify-center"><Arrow open /></span>
          <span className="ml-[8px]"><Check /></span>
          <span className="ml-2 mr-[7px]"><Checker /></span>
          <Fit w={36} className="italic leading-[18px] text-[#808080]">白地図</Fit>
        </div>
      </div>
    </div>
  );
}

const q = <QLogo />;
const gearIcon = <Svg s={15}><Gear c="#7ba3d4" hole="#fff" /></Svg>;
const tools: Row[] = [
  { t: '最近使ったツール', w: 78, i: <Clock s={15} /> },
  { t: 'データベース', w: 52, i: q }, { t: 'ネットワーク解析', w: 75, i: q }, { t: 'ファイルツール', w: 59, i: q },
  { t: 'プロット', w: 33, i: q }, { t: 'ベクタオーバーレイ', w: 80, i: q }, { t: 'ベクタジオメトリ', w: 70, i: q },
  { t: 'ベクタタイル', w: 55, i: q }, { t: 'ベクタテーブル', w: 63, i: q }, { t: 'ベクタ一般', w: 51, i: q },
  { t: 'ベクタ解析', w: 51, i: q }, { t: 'ベクタ作成', w: 51, i: q }, { t: 'ベクタ選択', w: 51, i: q },
  { t: 'メッシュ', w: 33, i: q }, { t: 'ラスタツール', w: 52, i: q }, { t: 'ラスタ解析', w: 49, i: q },
  { t: 'ラスタ作成', w: 49, i: q }, { t: 'ラスタ地形解析', w: 73, i: q }, { t: 'レイヤツール', w: 54, i: q },
  { t: '地図製作', w: 47, i: q }, { t: '内挿', w: 23, i: q },
  { t: 'GDAL', w: 29, i: <Svg s={16}><circle cx="15" cy="11" r="7.500" fill="#43a5c9" /><path d="M12 6l5 1 1 5-4 2z" fill="#6db36a" /><path d="M1 5l10-4M5 1l4 6" stroke="#444" strokeWidth="2" /><text x="0" y="24" fontSize="11" fontWeight="700" fill="#111" fontFamily="Liberation Sans" textLength="23" lengthAdjust="spacingAndGlyphs">GDAL</text></Svg> },
  { t: 'GRASS', w: 35, i: <Svg s={15}><path d="M12 1l10 10-10 11L2 11z" fill="#f2f2f2" stroke="#777" strokeWidth="1.300" /><path d="M12 19V7M12 18L7 9M12 18l5-9M12 18l-7-4M12 18l7-4" stroke="#3f9b3f" strokeWidth="1.600" /><path d="M4 22h16" stroke="#333" strokeWidth="1.500" /></Svg> },
  { t: 'JapanBasemap', w: 77, a: 'o', i: gearIcon },
  { t: '国土基本図図郭生成', w: 107, l: 1, sel: true, i: <Svg s={15}><Gear c="#4f93d2" hole="#fff" /></Svg> },
  { t: '地域メッシュ生成', w: 81, l: 1, i: gearIcon },
  { t: 'SAGA', w: 29, i: <Svg s={16}><path d="M21 5A10 10 0 1022 14M3 15c4-6 8-7 18-7M3 8c3 6 8 7 19 6M8 2c-2 8 2 14 9 18" stroke="#1d5c99" strokeWidth="2.300" /></Svg> },
  { t: 'スクリプト', w: 42, i: <Svg s={15}><Python /></Svg> },
];

function RightDock() {
  return (
    <div className="flex w-[262px] shrink-0 bg-[#f0f0f0] text-[12px]">
      <div className="flex w-[6px] shrink-0 items-center justify-center pb-[1px]"><span className={`h-4 border-l ${dots}`} /></div>
      <div className="flex min-w-0 flex-1 flex-col">
        <DockHead title="プロセシングツールボックス" w={119} />
        <div className="flex h-[32px] shrink-0 items-center gap-[8px] pb-[1px] pl-2">
          <Svg s={17}><g transform="scale(.7)"><Gear c="#cc2b2b" hole="#fff" /></g><g transform="translate(13 6) scale(.42)"><Gear c="#888" hole="#fff" /></g><g transform="translate(7 13) scale(.42)"><Gear c="#7ba3d4" hole="#fff" /></g><path d="M17 20h7l-3.500 4z" fill="#444" /></Svg>
          <Svg s={17}><g transform="scale(.85)"><Python /></g><path d="M17 20h7l-3.500 4z" fill="#444" /></Svg>
          <Clock s={16} />
          <Svg s={16}><path d="M4 1h11l6 6v16H4z" fill="#f5f5f5" stroke="#999" strokeWidth="1.300" /><path d="M7 8h8M7 11h10M7 14h10M7 17h10M7 20h6" stroke="#aaa" strokeWidth="1.500" /></Svg>
          <span className="h-3 w-px bg-[#c5c5c5]" />
          <Svg s={16} className="-ml-[2px]"><path d="M2 2h16v15h-9l-5 4v-4H2z" fill="#f5d93a" stroke="#b99a14" /><path d="M21 8l3 2-7 11-4 2 1-4z" fill="#ecd27a" stroke="#8a7a40" /></Svg>
          <span className="h-3 w-px bg-[#c5c5c5]" />
          <Svg s={17} className="-ml-[2px]"><path d="M12 12l10 10" stroke="#8a7330" strokeWidth="5" /><path d="M12 12l10 10" stroke="#ecd27a" strokeWidth="3" /><path d="M5 1l4 4-3 3-4-4c-2 4 2 8 6 7l3 3 3-3-3-3c1-4-2-8-6-7z" fill="#ddd" stroke="#777" /></Svg>
        </div>
        <div className="flex h-[21px] shrink-0 items-center rounded-[3px] border border-[#adadad] bg-white pl-[7px] text-[#777]">
          <Svg s={13}><circle cx="10" cy="10" r="7.500" stroke="#777" strokeWidth="1.800" /><path d="M16 16l7 7" stroke="#777" strokeWidth="2.200" /></Svg>
          <span className="ml-[7px] flex"><Fit w={31} className="leading-[18px]">検索...</Fit></span>
        </div>
        <div className="mt-px flex min-h-0 flex-1 flex-col border border-[#b5b5b5] bg-white pt-px">
          {tools.map((r) => (
            <div key={r.t} className={`flex h-[18px] shrink-0 items-center ${r.sel ? 'bg-[#efefef]' : ''} ${r.l ? 'pl-[25px]' : 'pl-[5px]'}`}>
              <span className="flex w-[10px] justify-center">{!r.l && <Arrow open={r.a === 'o'} />}</span>
              <span className="flex w-[30px] items-center justify-center">{r.i}</span>
              <Fit w={r.w} className="leading-[18px]">{r.t}</Fit>
            </div>
          ))}
        </div>
      </div>
    </div>
  );
}

/* ---------- map canvas ---------- */
const ys = [46, 136, 227, 317.5, 408, 499, 589.5, 680, 771, 862, 952, 1043, 1134];
const starts = [1531, 1531, 1410, 1289, 1289, 1168, 1047, 1047, 926, 805, 805, 684];
const names = ['116', '117', '118', '119', '210', '211', '212', '213', '214', '215', '216', '217'];
const purple =
  'M1531 110V227H1410V317.500H1289V499H1168V589.500H1047V771H926V862H805V1043H684V1060H1670V110z';
const cells = ys.slice(0, 12).flatMap((y, r) => {
  const cy = r === 0 ? 128.5 : r === 11 ? 1047 : (y + ys[r + 1]) / 2;
  const out: { x: number; y: number; t: string }[] = [];
  for (let x = starts[r]; x <= 1531; x += 121) out.push({ x: x + 60.5, y: cy, t: `09MD${names[r]}${(x - 442) / 121}` });
  const edge = { x: 1655, y: cy, t: `09MD${names[r][0]}2${names[r][2]}0` };
  return r === 11 ? [edge, ...out] : [...out, edge];
});
const blocks: [number, number, string][] = [
  [1531, 174, '113E'], [1655, 174, '123A'],
  [1289, 317, '114D'], [1531, 317, '114E'], [1655, 317, '124A'],
  [1289, 499, '210D'], [1531, 499, '210E'], [1655, 499, '220A'],
  [1047, 680, '211C'], [1289, 680, '211D'], [1531, 680, '211E'], [1655, 680, '221A'],
  [805, 862, '212B'], [1047, 862, '212C'], [1289, 862, '212D'], [1531, 862, '212E'], [1655, 862, '222A'],
  [805, 1001.5, '213B'], [1047, 1001.5, '213C'],
];
const sheets: [number, number, string][] = [[1047, 262, '11'], [1655, 262, '12'], [1047, 727, '21'], [1655, 727, '22']];

function MapCanvas() {
  return (
    <svg width="1394" height="929" viewBox="263 122 1394 929" className="shrink-0 bg-white" fontFamily="'Noto Sans', sans-serif">
      <defs><clipPath id="area"><path d={purple} /></clipPath></defs>
      <rect x="442" y="100" width="1230" height="960" fill="#f7e8e5" />
      <path d="M442.500 100V1060M442 408H1168" stroke="#9b1c10" strokeWidth="2" />
      <path d="M1410 100V227H1168V589.500H926V771H684V1060H1600V100z" fill="#f8dab0" />
      <path d="M1410 100V227H1168V499M1168 408H1289M1047 589.500H926V771H684V1060M684 952H805" stroke="#fbbf16" strokeWidth="2" fill="none" />
      <path d={purple} fill="#9b8ab9" />
      <g clipPath="url(#area)">
        <path d="M1656 107L805 1074.500H1670V107z" fill="#8a7aa8" />
        <path d="M1656 107L805 1074.500" stroke="#98436f" strokeWidth="2" />
      </g>
      <g stroke="#06b38d" strokeWidth="2">
        {starts.map((s, r) => {
          const lines = [<path key="h" d={`M${s} ${ys[r]}H1670`} />];
          for (let x = s; x <= 1652; x += 121) lines.push(<path key={x} d={`M${x} ${ys[r]}V${ys[r + 1]}`} />);
          return <g key={r}>{lines}</g>;
        })}
      </g>
      <g fontSize="50" fontWeight="500" fill="#6b3322" stroke="#fff" strokeWidth="4" strokeLinejoin="round" paintOrder="stroke">
        {sheets.map(([x, y, t]) => <text key={t} x={x - 92} y={y + 18} textLength="184" lengthAdjust="spacingAndGlyphs">09MD{t}</text>)}
      </g>
      <g fontSize="23" fontWeight="500" fill="#eabc14" stroke="#0a0a0a" strokeWidth="5" strokeLinejoin="round" paintOrder="stroke">
        {blocks.map(([x, y, t]) => <text key={t} x={x - 54.500} y={y + 7.500} textLength="109" lengthAdjust="spacingAndGlyphs">09MD{t}</text>)}
      </g>
      <g fontSize="19" fontWeight="500" fill="#4b4be8" stroke="#fff" strokeWidth="4" strokeLinejoin="round" paintOrder="stroke">
        {cells.map((c) => <text key={c.t} x={c.x - 44.500} y={c.y + 6} textLength="89" lengthAdjust="spacingAndGlyphs">{c.t}</text>)}
      </g>
    </svg>
  );
}

/* ---------- frame ---------- */
const menus: [string, string, number][] = [
  ['プロジェクト', 'J', 64], ['編集', 'E', 36], ['ビュー', 'V', 39], ['レイヤ', 'L', 40], ['設定', 'S', 37], ['プラグイン', 'P', 59],
  ['ベクタ', 'O', 43], ['ラスタ', 'R', 40], ['データベース', 'D', 69], ['Web', 'W', 43], ['メッシュ', 'M', 52], ['プロセシング', 'C', 70], ['ヘルプ', 'H', 46],
];
const field = 'flex h-[21px] shrink-0 items-center rounded-[3px] border border-[#b0b0b0] bg-white';
const Spin = () => (
  <span className="ml-auto flex h-full w-[14px] flex-col items-center justify-center gap-[3px] border-l border-[#c5c5c5] bg-[#f7f7f7]">
    <span className="border-x-[4px] border-b-[5px] border-x-transparent border-b-[#666]" />
    <span className="border-x-[4px] border-t-[5px] border-x-transparent border-t-[#666]" />
  </span>
);

export default function App() {
  return (
    <div className={`relative flex h-[1080px] w-[1920px] flex-col overflow-hidden bg-[#f0f0f0] text-[12px] text-black ${UI}`}>
      <div className="flex h-[23px] shrink-0 items-center bg-white pl-[2px]">
        <QLogo s={16} />
        <span className="ml-[5px] flex"><Fit w={135}>*無題のプロジェクト — QGIS</Fit></span>
        <div className="ml-auto flex items-center gap-9 pb-[3px] pr-5">
          <span className="h-px w-[10px] bg-black" />
          <Svg s={10}><path d="M1.500 6.500h16v16h-16zM6 6V1.500h16.500V18H18" stroke="#000" strokeWidth="2.400" /></Svg>
          <Svg s={10}><path d="M1 1l22 22M23 1L1 23" stroke="#000" strokeWidth="2.400" /></Svg>
        </div>
      </div>
      <div className="flex h-[19px] shrink-0 items-center gap-[15px] border-b border-[#d9d9d9] bg-[#f0f0f0] pl-[10px] pt-[2px]">
        {menus.map(([t, k, w]) => <Fit key={t} w={w}>{t}(<u>{k}</u>)</Fit>)}
      </div>
      <MainBar />
      <EditBar />
      <div className="flex h-[929px] shrink-0">
        <LeftDock />
        <MapCanvas />
        <div className="w-px shrink-0 bg-[#b5b5b5]" />
        <RightDock />
      </div>
      <div className="flex h-[29px] shrink-0 items-center border-t border-[#c5c5c5] text-[11px]">
        <div className={`${field} ml-1 w-[200px] pl-2 text-[#777]`}>
          <Svg s={13}><circle cx="10" cy="10" r="7.500" stroke="#777" strokeWidth="1.800" /><path d="M16 16l7 7" stroke="#777" strokeWidth="2.200" /></Svg>
          <span className="ml-[7px] flex"><Fit w={76}>検索(Ctrl + K)</Fit></span>
        </div>
        <span className="ml-[7px] flex"><Fit w={167}>カレントレイヤの編集モードを切り替える</Fit></span>
        <span className="ml-auto flex"><Fit w={21}>座標</Fit></span>
        <div className={`${field} ml-[5px] w-[89px] pl-[6px]`}><Fit w={73}>-33839,-66059</Fit></div>
        <Svg s={15} className="ml-[4px]"><path d="M5 2l6 8M9 1l6 9M2 6l7 8M14 3c4 3 2 8-2 8M4 12l8 11M20 12c-4 0-6 4-4 8" stroke="#555" strokeWidth="2.500" /><circle cx="18" cy="17" r="4.500" stroke="#555" strokeWidth="2" /></Svg>
        <span className="ml-[13px] flex"><Fit w={21}>縮尺</Fit></span>
        <div className={`${field} ml-[5px] w-[79px] pl-[3px]`}>
          <Fit w={38}>1:12500</Fit>
          <span className="ml-auto flex h-full w-5 items-center justify-center border-l border-[#c5c5c5] bg-[#f7f7f7]"><span className="border-x-[4px] border-t-[5px] border-x-transparent border-t-[#555]" /></span>
        </div>
        <Svg s={16} className="ml-[10px]"><path d="M7 12V7a5 5 0 0110 0v5" stroke="#777" strokeWidth="2.500" /><rect x="3" y="11" width="18" height="12" rx="2" fill="#555" /></Svg>
        <span className="ml-[6px] flex"><Fit w={22}>拡大</Fit></span>
        <div className={`${field} ml-[4px] w-[83px] pl-[3px]`}><Fit w={25}>100%</Fit><Spin /></div>
        <span className="ml-[8px] flex"><Fit w={21}>回転</Fit></span>
        <div className={`${field} ml-[11px] w-[83px] pl-[4px]`}><Fit w={20}>0.0 °</Fit><Spin /></div>
        <span className="ml-[6px] flex"><Check on /></span>
        <span className="ml-[5px] flex"><Fit w={23}>レンダ</Fit></span>
        <Svg s={15} className="ml-[17px]"><Grid c="#555" bg="#aaa" /></Svg>
        <span className="ml-[2px] flex"><Fit w={52}>EPSG:6677</Fit></span>
        <Svg s={17} className="ml-[23px] mr-[7px]"><path d="M12 2c6 0 11 3.500 11 9 0 4-3 7-6 8l3 5-7-4.500C6 20 1 16 1 11c0-5.500 5-9 11-9z" fill="#555" /><circle cx="7" cy="11" r="1.500" fill="#fff" /><circle cx="12" cy="11" r="1.500" fill="#fff" /><circle cx="17" cy="11" r="1.500" fill="#fff" /></Svg>
      </div>
      <div className="absolute left-[1107px] top-[926px] flex h-[99px] w-[791px] flex-col border-4 border-black bg-white pl-[9px] text-[26px]">
        <div className="flex h-[41px] items-center"><Fit w={757} className="leading-[41px]">出展：地理院タイル(白地図)に図郭と適当な図を追記して掲載</Fit></div>
        <div className="flex h-[44px] items-center pl-[86px]"><Fit w={645} className="leading-[44px]">https://maps.gsi.go.jp/development/ichiran.html</Fit></div>
      </div>
    </div>
  );
}
